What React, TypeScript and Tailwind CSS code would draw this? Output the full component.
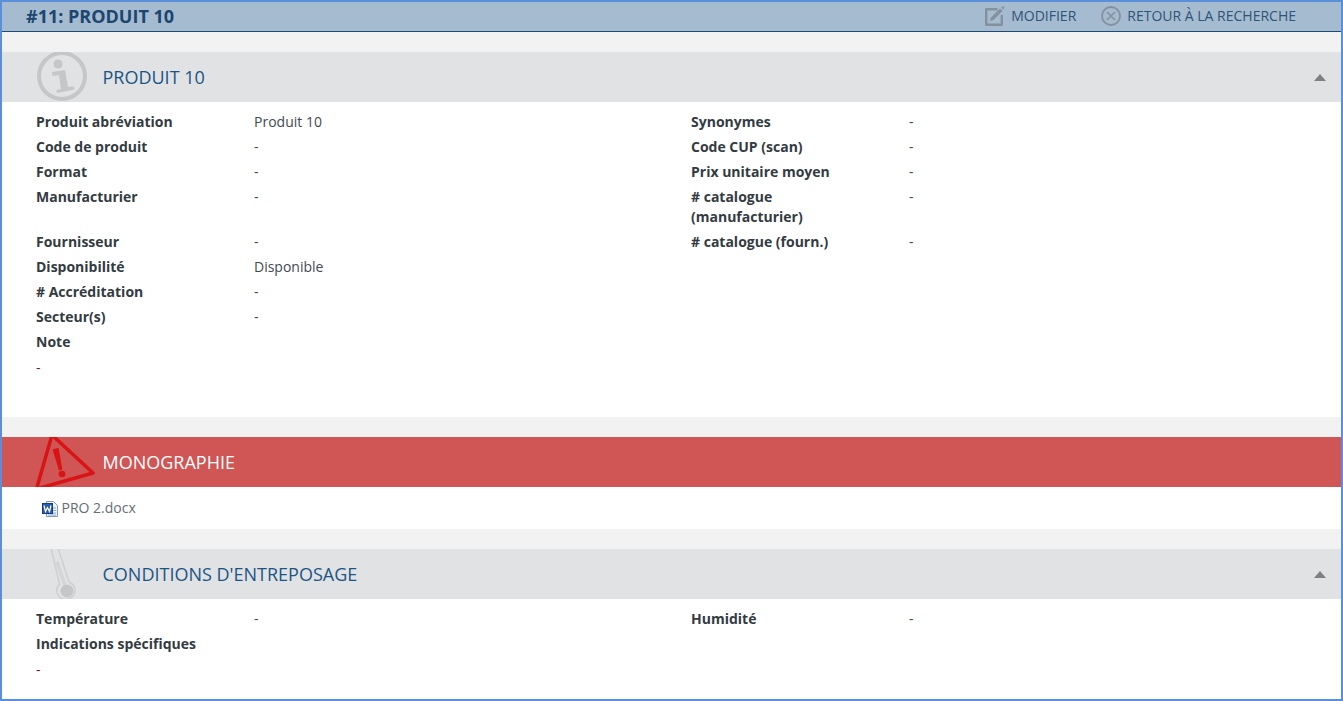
const font = { fontFamily: '"Open Sans", sans-serif' };

const Row = ({ label, value, tall }: { label: string; value?: string; tall?: boolean }) => (
  <div className="flex pb-[5px]">
    <div className="w-[218px] shrink-0 font-bold text-[#333b42]">{label}</div>
    {value && <div className={tall ? "h-[40px]" : ""}>{value}</div>}
  </div>
);

const Caret = () => (
  <div className="ml-auto mr-[15px] mt-[1px] h-0 w-0 border-x-[6px] border-b-[7px] border-x-transparent border-b-[#808080]" />
);

const InfoIcon = () => (
  <svg width="52" height="52" viewBox="0 0 52 52" className="shrink-0">
    <circle cx="26" cy="25" r="23" fill="none" stroke="#c4c6c8" strokeWidth="4" />
    <circle cx="22" cy="13" r="4.5" fill="#c4c6c8" />
    <path d="M16 21 L29 19 L32 36 L38 35.5 L38.5 38.5 L21 42 L20.5 39 L25 38 L23 24 L16.5 25 Z" fill="#c4c6c8" />
  </svg>
);

const WarningIcon = () => (
  <svg width="64" height="56" viewBox="0 0 64 56" className="shrink-0">
    <path d="M20 1 L61 39 L4.5 55 Z" fill="none" stroke="#d81414" strokeWidth="3.5" strokeLinejoin="round" />
    <path d="M21.5 16 L26 14.8 L29.5 35 L27.5 35.5 Z" fill="#d81414" stroke="#d81414" strokeWidth="1.5" strokeLinejoin="round" />
    <circle cx="30" cy="40" r="3.3" fill="#d81414" />
  </svg>
);

const ThermoIcon = () => (
  <svg width="30" height="50" viewBox="0 0 30 50" className="shrink-0">
    <path d="M1 -1 L9.5 35 A9 9 0 1 0 19 33 L8 -1" fill="none" stroke="#cdcfd1" strokeWidth="1.5" />
    <path d="M6.7 12.7 L15 36" fill="none" stroke="#d3d5d7" strokeWidth="3.5" />
    <circle cx="17" cy="42" r="6.5" fill="#c4c6c8" />
  </svg>
);

const EditIcon = () => (
  <svg width="20" height="20" viewBox="0 0 20 20">
    <path d="M12.5 3.2 H1.2 V18.8 H16.8 V9" fill="none" stroke="#83919e" strokeWidth="2.4" strokeLinejoin="round" />
    <path d="M5 15 L6 11.5 L15 2.5 L17.5 5 L8.5 14 Z" fill="#83919e" />
    <path d="M16 1.5 L19.5 0 L18.5 3.8 Z" fill="#83919e" />
  </svg>
);

const CloseIcon = () => (
  <svg width="20" height="20" viewBox="0 0 20 20">
    <circle cx="10" cy="10" r="9" fill="none" stroke="#83919e" strokeWidth="1.8" />
    <path d="M6 6 L14 14 M14 6 L6 14" stroke="#83919e" strokeWidth="1.6" />
  </svg>
);

const WordIcon = () => (
  <svg width="16" height="16" viewBox="0 0 16 16" className="mt-[1px] shrink-0">
    <path d="M4.5 0.5 H11.5 L15.5 4.5 V15.5 H4.5 Z" fill="#eef3fa" stroke="#7f9cc4" />
    <path d="M11 7 H14 M11 9.5 H14 M11 12 H14 M6 14 H14" stroke="#8fa9cf" />
    <rect x="0.5" y="2.5" width="10" height="10" fill="#2a5cb0" stroke="#173a78" />
    <path d="M2 4.5 L3.5 10.5 L5.5 6.5 L7.5 10.5 L9 4.5" fill="none" stroke="#fff" strokeWidth="1.2" />
  </svg>
);

const App = () => {
  return (
    <div style={font} className="h-[701px] w-[1343px] overflow-hidden border-2 border-[#5b8fd9] bg-white text-[14px] leading-[20px] text-[#3f4a52]">
      <div className="flex h-[30px] items-center border-b border-[#1f4a74] bg-[#a5bbd0] pb-[2px] pl-[24px]">
        <div className="text-[18px] font-bold text-[#1c4670]">#11: PRODUIT 10</div>
        <div className="ml-auto flex items-center pr-[45px] text-[#2f5379]">
          <EditIcon />
          <span className="ml-[6px]">MODIFIER</span>
          <span className="ml-[25px]"><CloseIcon /></span>
          <span className="ml-[6px]">RETOUR À LA RECHERCHE</span>
        </div>
      </div>

      <div className="h-[20px] bg-[#f2f2f2]" />
      <div className="flex h-[50px] items-center overflow-hidden bg-[#e1e2e4] pl-[34px]">
        <InfoIcon />
        <div className="ml-[14.5px] text-[18px] text-[#1b5584]">PRODUIT 10</div>
        <Caret />
      </div>
      <div className="h-[315px] pl-[34px] pt-[10px]">
        <div className="grid grid-cols-[655px_1fr]">
          <div>
            <Row label="Produit abréviation" value="Produit 10" />
            <Row label="Code de produit" value="-" />
            <Row label="Format" value="-" />
            <Row label="Manufacturier" value="-" tall />
            <Row label="Fournisseur" value="-" />
            <Row label="Disponibilité" value="Disponible" />
            <Row label="# Accréditation" value="-" />
            <Row label="Secteur(s)" value="-" />
            <Row label="Note" />
            <div className="pt-[1px] text-[#5a2a2a]">-</div>
          </div>
          <div>
            <Row label="Synonymes" value="-" />
            <Row label="Code CUP (scan)" value="-" />
            <Row label="Prix unitaire moyen" value="-" />
            <div className="flex pb-[5px]">
              <div className="w-[218px] shrink-0 font-bold text-[#333b42]">
                # catalogue<br />(manufacturier)
              </div>
              <div>-</div>
            </div>
            <Row label="# catalogue (fourn.)" value="-" />
          </div>
        </div>
      </div>

      <div className="h-[20px] bg-[#f2f2f2]" />
      <div className="flex h-[50px] items-center overflow-hidden bg-[#d05555] pl-[30px]">
        <WarningIcon />
        <div className="ml-[6.5px] text-[18px] text-white">MONOGRAPHIE</div>
      </div>
      <div className="flex h-[42px] items-center pl-[40px] text-[#666e75]">
        <WordIcon />
        <span className="ml-[3.5px]">PRO 2.docx</span>
      </div>

      <div className="h-[20px] bg-[#f2f2f2]" />
      <div className="flex h-[50px] items-center overflow-hidden bg-[#e1e2e4] pl-[48px]">
        <ThermoIcon />
        <div className="ml-[22.5px] text-[18px] text-[#1b5584]">CONDITIONS D'ENTREPOSAGE</div>
        <Caret />
      </div>
      <div className="pl-[34px] pt-[10px]">
        <div className="grid grid-cols-[655px_1fr]">
          <div>
            <Row label="Température" value="-" />
            <Row label="Indications spécifiques" />
            <div className="pt-[1px] text-[#5a2a2a]">-</div>
          </div>
          <div>
            <Row label="Humidité" value="-" />
          </div>
        </div>
      </div>
    </div>
  );
};

export default App;
